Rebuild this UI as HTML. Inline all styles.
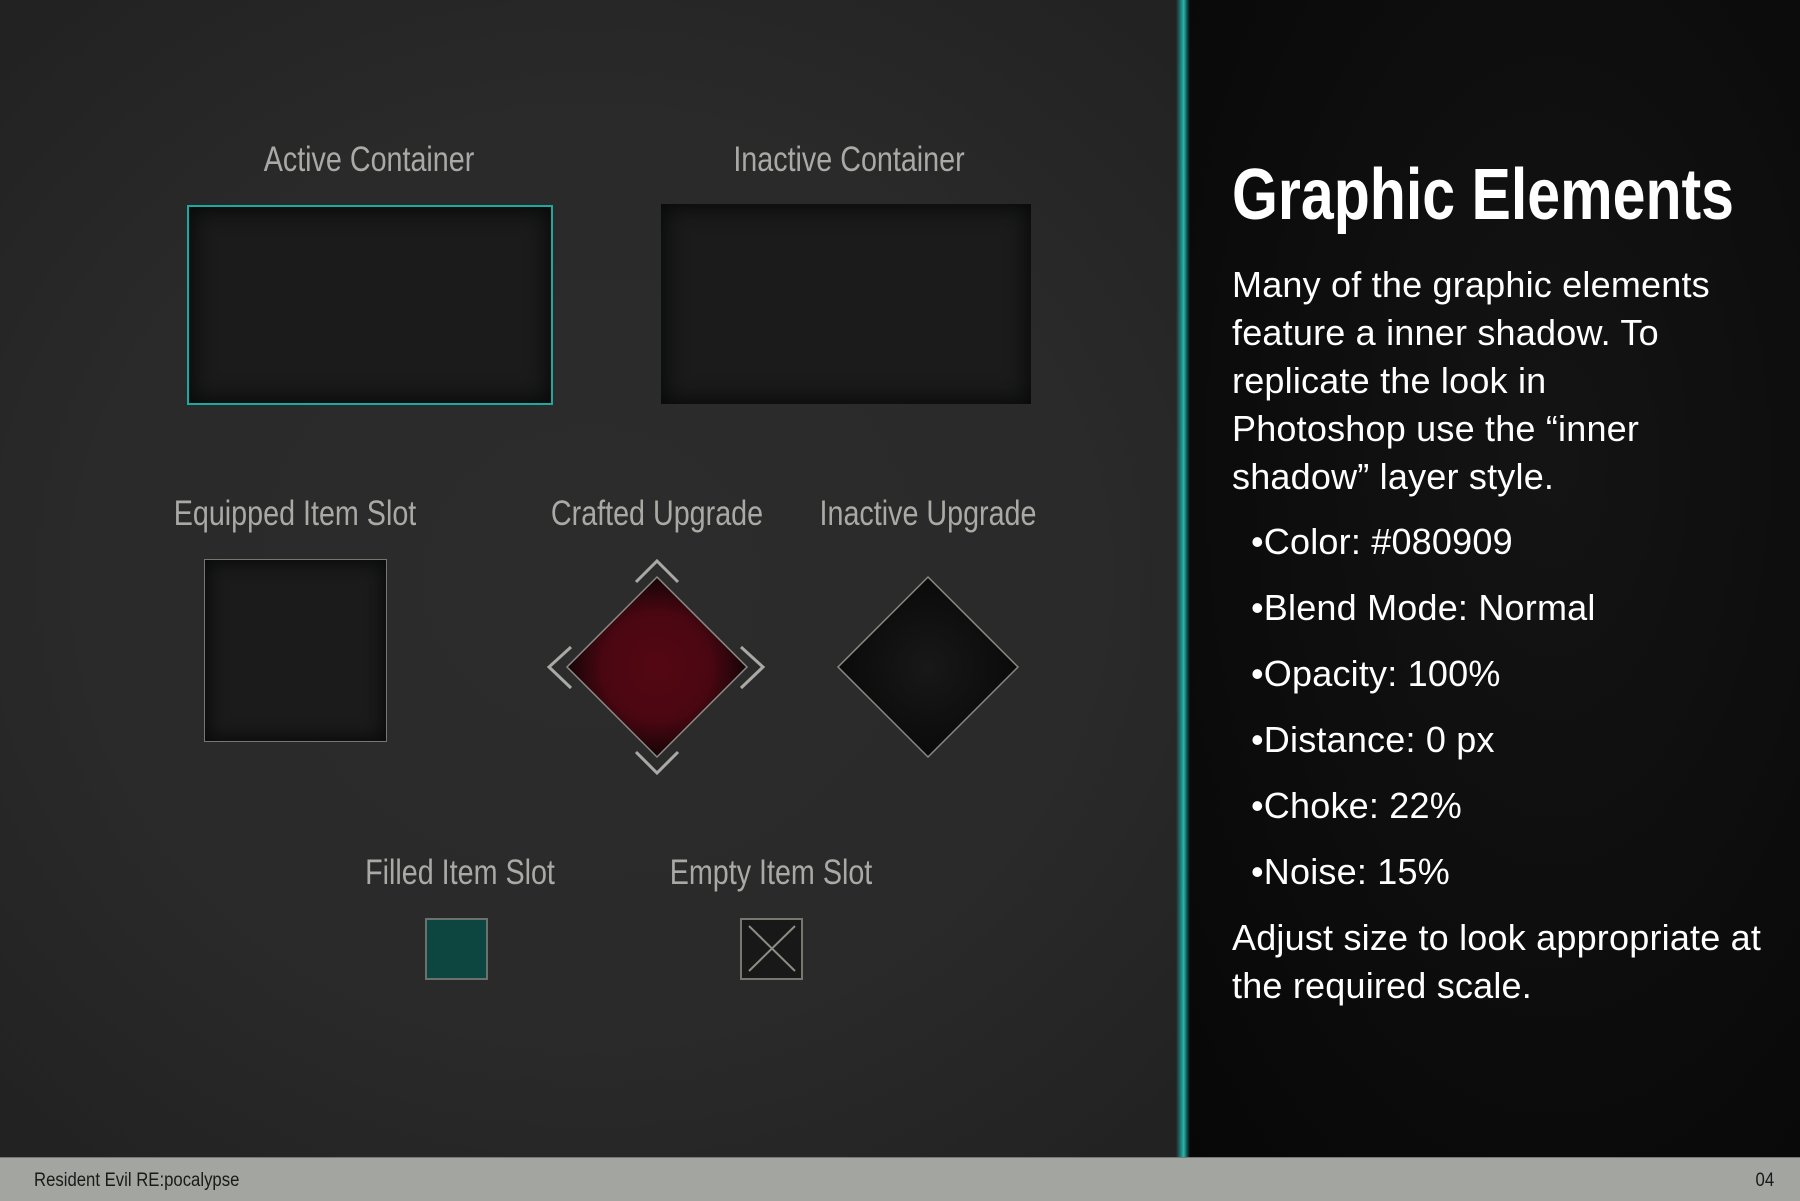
<!DOCTYPE html>
<html><head><meta charset="utf-8"><style>
html,body{margin:0;padding:0}
body{width:1800px;height:1200px;position:relative;overflow:hidden;background:#2a2a2a;font-family:"Liberation Sans",sans-serif}
#left{position:absolute;left:0;top:0;width:1182px;height:1157px;background:radial-gradient(ellipse 70% 65% at 50% 50%,#2c2c2c 0%,#2a2a2a 60%,#222 100%)}
#right{position:absolute;left:1182px;top:0;width:618px;height:1157px;background:radial-gradient(ellipse at 60% 40%,#141414,#070707);}
#glow{position:absolute;left:1176px;top:0;width:14px;height:1157px;background:linear-gradient(90deg,rgba(20,120,115,0) 0%,#1a8f88 40%,#2bb5ac 55%,#0f4a47 80%,rgba(0,0,0,0) 100%)}
.lbl{position:absolute;font-size:35px;line-height:36px;color:#a9a9a5;white-space:nowrap;transform:translateX(-50%) scaleX(0.82);transform-origin:50% 50%}
.lblw{position:absolute;width:0;display:flex;justify-content:center}
.box{position:absolute;box-sizing:border-box;background:#1b1b1b;box-shadow:inset 0 0 22px 4px #080909}
.t{position:absolute;left:1232px;color:#fff;white-space:nowrap;font-size:36px;line-height:35px;letter-spacing:0.2px}
#footer{position:absolute;left:0;top:1157px;width:1800px;height:43px;background:#a3a5a0;border-top:1px solid #777}
.ft{position:absolute;top:12px;font-size:19px;color:#1a1a1a;transform:scaleX(0.88)}
</style></head><body>
<div id="left"></div>
<div id="right"></div>
<div id="glow"></div>

<div class="lbl" style="left:369px;top:142px">Active Container</div>
<div class="lbl" style="left:849px;top:142px">Inactive Container</div>
<div class="lbl" style="left:295px;top:496px">Equipped Item Slot</div>
<div class="lbl" style="left:657px;top:496px">Crafted Upgrade</div>
<div class="lbl" style="left:928px;top:496px">Inactive Upgrade</div>
<div class="lbl" style="left:460px;top:855px">Filled Item Slot</div>
<div class="lbl" style="left:771px;top:855px">Empty Item Slot</div>

<div class="box" style="left:187px;top:205px;width:366px;height:200px;border:2px solid #1fa89e"></div>
<div class="box" style="left:661px;top:204px;width:370px;height:200px"></div>
<div class="box" style="left:204px;top:559px;width:183px;height:183px;border:1px solid #77776f;box-shadow:inset 0 0 18px 3px #080909"></div>

<svg style="position:absolute;left:0;top:0" width="1182" height="1157">
<defs>
<radialGradient id="rg" cx="50%" cy="50%" r="50%"><stop offset="0" stop-color="#540712"/><stop offset="0.6" stop-color="#4a0712"/><stop offset="1" stop-color="#150406"/></radialGradient>
<radialGradient id="kg" cx="50%" cy="50%" r="50%"><stop offset="0" stop-color="#181818"/><stop offset="1" stop-color="#0a0a0a"/></radialGradient>
</defs>
<polygon points="657,577 747,667 657,757 567,667" fill="url(#rg)" stroke="#8a8a85" stroke-width="1.5"/>
<g fill="none" stroke="#a9a9a5" stroke-width="3">
<polyline points="636,582 657,561 678,582"/>
<polyline points="636,752 657,773 678,752"/>
<polyline points="571,647 549,667 571,688"/>
<polyline points="741,647 763,667 741,688"/>
</g>
<polygon points="928,577 1018,667 928,757 838,667" fill="url(#kg)" stroke="#8a8a85" stroke-width="1.5"/>
<rect x="426" y="919" width="61" height="60" fill="#0d4541" stroke="#6b726e" stroke-width="2"/>
<rect x="741" y="919" width="61" height="60" fill="#181818" stroke="#77776f" stroke-width="2"/>
<g stroke="#8d8d86" stroke-width="2"><line x1="749" y1="926" x2="795" y2="971"/><line x1="795" y1="926" x2="749" y2="971"/></g>
</svg>

<div class="t" style="top:160px;font-weight:bold;font-size:72px;line-height:70px;letter-spacing:0;transform:scaleX(0.82);transform-origin:0 50%">Graphic Elements</div>
<div class="t" style="top:267px">Many of the graphic elements</div>
<div class="t" style="top:315px">feature a inner shadow. To</div>
<div class="t" style="top:363px">replicate the look in</div>
<div class="t" style="top:411px">Photoshop use the “inner</div>
<div class="t" style="top:459px">shadow” layer style.</div>
<div class="t" style="top:524px;left:1251px">•Color: #080909</div>
<div class="t" style="top:590px;left:1251px">•Blend Mode: Normal</div>
<div class="t" style="top:656px;left:1251px">•Opacity: 100%</div>
<div class="t" style="top:722px;left:1251px">•Distance: 0 px</div>
<div class="t" style="top:788px;left:1251px">•Choke: 22%</div>
<div class="t" style="top:854px;left:1251px">•Noise: 15%</div>
<div class="t" style="top:920px">Adjust size to look appropriate at</div>
<div class="t" style="top:968px">the required scale.</div>

<div id="footer">
<div class="ft" style="left:34px;transform-origin:0 50%">Resident Evil RE:pocalypse</div>
<div class="ft" style="right:26px;transform-origin:100% 50%">04</div>
</div>
</body></html>
